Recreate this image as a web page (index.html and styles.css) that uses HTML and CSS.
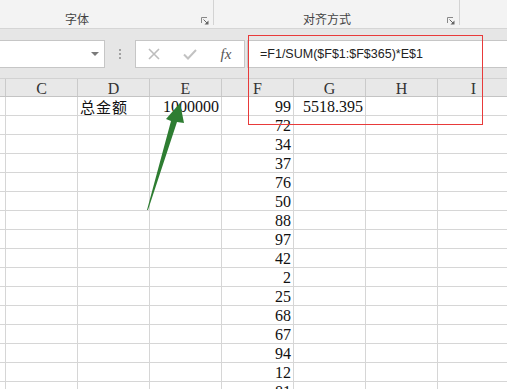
FILE: index.html
```html
<!DOCTYPE html>
<html lang="zh-CN">
<head>
    <meta charset="UTF-8">
    <title>工作表</title>
    <link rel="stylesheet" href="styles.css">
</head>
<body>
    <!-- ribbon group labels -->
    <div class="ribbon">
        <div class="group g-font">
            <span class="group-label">字体</span>
            <span class="launcher"><svg width="8" height="8" viewBox="0 0 8 8"><path d="M0.5 6V0.5H6" fill="none" stroke="#888"/><path d="M2.5 2.5L6.5 6.5" stroke="#666"/><path d="M7.5 3.5V7.5H3.5Z" fill="#666"/></svg></span>
        </div>
        <div class="group g-align">
            <span class="group-label">对齐方式</span>
            <span class="launcher"><svg width="8" height="8" viewBox="0 0 8 8"><path d="M0.5 6V0.5H6" fill="none" stroke="#888"/><path d="M2.5 2.5L6.5 6.5" stroke="#666"/><path d="M7.5 3.5V7.5H3.5Z" fill="#666"/></svg></span>
        </div>
    </div>

    <!-- formula bar -->
    <div class="formula-area">
        <div class="formula-bar">
            <div class="name-box"><span class="dropdown"></span></div>
            <div class="grip"><span class="dots"></span></div>
            <div class="fx-buttons">
                <span class="btn"><svg width="12" height="12" viewBox="0 0 12 12"><path d="M1 1L11 11M11 1L1 11" stroke="#bdbdbd" stroke-width="1.6"/></svg></span>
                <span class="btn"><svg width="14" height="11" viewBox="0 0 14 11"><path d="M1 5.5L5 9.5L13 1" fill="none" stroke="#c2c2c2" stroke-width="2"/></svg></span>
                <span class="btn fx">fx</span>
            </div>
            <div class="formula-input">=F1/SUM($F$1:$F$365)*E$1</div>
        </div>
    </div>

    <!-- grid -->
    <div class="sheet">
        <div class="row head">
            <div class="cell stub"></div>
            <div class="cell">C</div><div class="cell">D</div><div class="cell">E</div><div class="cell">F</div>
            <div class="cell">G</div><div class="cell">H</div><div class="cell">I</div>
        </div>
        <div class="row">
            <div class="cell stub"></div><div class="cell"></div>
            <div class="cell text">总金额</div>
            <div class="cell num">1000000</div>
            <div class="cell num">99</div>
            <div class="cell num">5518.395</div>
            <div class="cell"></div><div class="cell"></div>
        </div>
        <div class="row"><div class="cell stub"></div><div class="cell"></div><div class="cell"></div><div class="cell"></div><div class="cell num">72</div><div class="cell"></div><div class="cell"></div><div class="cell"></div></div>
        <div class="row"><div class="cell stub"></div><div class="cell"></div><div class="cell"></div><div class="cell"></div><div class="cell num">34</div><div class="cell"></div><div class="cell"></div><div class="cell"></div></div>
        <div class="row"><div class="cell stub"></div><div class="cell"></div><div class="cell"></div><div class="cell"></div><div class="cell num">37</div><div class="cell"></div><div class="cell"></div><div class="cell"></div></div>
        <div class="row"><div class="cell stub"></div><div class="cell"></div><div class="cell"></div><div class="cell"></div><div class="cell num">76</div><div class="cell"></div><div class="cell"></div><div class="cell"></div></div>
        <div class="row"><div class="cell stub"></div><div class="cell"></div><div class="cell"></div><div class="cell"></div><div class="cell num">50</div><div class="cell"></div><div class="cell"></div><div class="cell"></div></div>
        <div class="row"><div class="cell stub"></div><div class="cell"></div><div class="cell"></div><div class="cell"></div><div class="cell num">88</div><div class="cell"></div><div class="cell"></div><div class="cell"></div></div>
        <div class="row"><div class="cell stub"></div><div class="cell"></div><div class="cell"></div><div class="cell"></div><div class="cell num">97</div><div class="cell"></div><div class="cell"></div><div class="cell"></div></div>
        <div class="row"><div class="cell stub"></div><div class="cell"></div><div class="cell"></div><div class="cell"></div><div class="cell num">42</div><div class="cell"></div><div class="cell"></div><div class="cell"></div></div>
        <div class="row"><div class="cell stub"></div><div class="cell"></div><div class="cell"></div><div class="cell"></div><div class="cell num">2</div><div class="cell"></div><div class="cell"></div><div class="cell"></div></div>
        <div class="row"><div class="cell stub"></div><div class="cell"></div><div class="cell"></div><div class="cell"></div><div class="cell num">25</div><div class="cell"></div><div class="cell"></div><div class="cell"></div></div>
        <div class="row"><div class="cell stub"></div><div class="cell"></div><div class="cell"></div><div class="cell"></div><div class="cell num">68</div><div class="cell"></div><div class="cell"></div><div class="cell"></div></div>
        <div class="row"><div class="cell stub"></div><div class="cell"></div><div class="cell"></div><div class="cell"></div><div class="cell num">67</div><div class="cell"></div><div class="cell"></div><div class="cell"></div></div>
        <div class="row"><div class="cell stub"></div><div class="cell"></div><div class="cell"></div><div class="cell"></div><div class="cell num">94</div><div class="cell"></div><div class="cell"></div><div class="cell"></div></div>
        <div class="row"><div class="cell stub"></div><div class="cell"></div><div class="cell"></div><div class="cell"></div><div class="cell num">12</div><div class="cell"></div><div class="cell"></div><div class="cell"></div></div>
        <div class="row"><div class="cell stub"></div><div class="cell"></div><div class="cell"></div><div class="cell"></div><div class="cell num">81</div><div class="cell"></div><div class="cell"></div><div class="cell"></div></div>
    </div>

    <!-- annotations drawn over the screenshot -->
    <div class="highlight"></div>
    <svg class="arrow" width="507" height="389" viewBox="0 0 507 389">
        <polygon points="147,210 171,121 166,119 180,103 184,123 177,122 148,210" fill="#2e7d32"/>
    </svg>
</body>
</html>
```

FILE: styles.css
```css
body {
    margin: 0;
    width: 507px;
    height: 389px;
    overflow: hidden;
    position: relative;
    background-color: #fff;
    font-family: "Noto Sans CJK SC", sans-serif;
}

/* Лента */
.ribbon {
    height: 28px;
    background-color: #f3f3f3;
    border-bottom: 1px solid #d5d5d5;
    display: flex;
}
.group {
    height: 25px;
    box-sizing: border-box;
    border-right: 1px solid #d3d3d3;
    padding-top: 10px;
    display: flex;
}
.g-font {
    width: 214px;
}
.g-font .group-label {
    width: 154px;
}
.g-align {
    width: 246px;
}
.g-align .group-label {
    width: 226px;
}
.group-label {
    font-size: 12px;
    line-height: 17px;
    color: #444;
    text-align: center;
}
.launcher {
    margin-left: auto;
    margin-right: 4px;
    align-self: flex-end;
    height: 8px;
}
.launcher svg {
    display: block;
}

/* Строка формул */
.formula-area {
    height: 49px;
    box-sizing: border-box;
    padding-top: 11px;
    background-color: #e6e6e6;
}
.formula-bar {
    display: flex;
    height: 28px;
}
.name-box {
    width: 105px;
    box-sizing: border-box;
    background-color: #fff;
    border: 1px solid #c6c6c6;
    border-left: none;
    display: flex;
    justify-content: flex-end;
    align-items: center;
    padding-right: 5px;
}
.dropdown {
    width: 0;
    height: 0;
    border-left: 4px solid transparent;
    border-right: 4px solid transparent;
    border-top: 4px solid #7a7a7a;
}
.grip {
    width: 30px;
    display: flex;
    justify-content: center;
    align-items: center;
}
.dots {
    width: 2px;
    height: 10px;
    background: repeating-linear-gradient(to bottom, #a2a2a2 0 2px, transparent 2px 4px);
}
.fx-buttons {
    width: 110px;
    box-sizing: border-box;
    background-color: #fff;
    border: 1px solid #c6c6c6;
    display: flex;
}
.btn {
    width: 36px;
    display: flex;
    justify-content: center;
    align-items: center;
}
.btn svg {
    display: block;
}
.fx {
    font-family: "Liberation Serif", serif;
    font-style: italic;
    font-size: 15px;
    color: #555;
}
.formula-input {
    flex-grow: 1;
    margin-left: 2px;
    box-sizing: border-box;
    background-color: #fff;
    border: 1px solid #c6c6c6;
    border-right: none;
    padding-left: 12px;
    font-family: "Liberation Sans", Arial, sans-serif;
    font-size: 12.5px;
    line-height: 26px;
    color: #222;
}

/* Таблица */
.row {
    display: flex;
    height: 19px;
    box-sizing: border-box;
    border-bottom: 1px solid #d6d6d6;
}
.cell {
    width: 72px;
    flex-shrink: 0;
    box-sizing: border-box;
    border-right: 1px solid #d6d6d6;
    font-family: "Liberation Serif", serif;
    font-size: 16px;
    line-height: 18px;
    padding-top: 1px;
    color: #111;
    white-space: nowrap;
}
.cell.stub {
    width: 6px;
}
.head {
    background-color: #e8e8e8;
    border-top: 1px solid #d2d2d2;
    border-bottom-color: #c4c4c4;
}
.head .cell {
    border-right-color: #cacaca;
    text-align: center;
    font-size: 16px;
    line-height: 17px;
    padding-top: 1px;
    color: #333;
}
.num {
    text-align: right;
    padding-right: 2px;
}
.text {
    padding-left: 2px;
    font-family: "Noto Sans CJK SC", sans-serif;
    font-size: 15px;
    line-height: 17px;
    letter-spacing: 1px;
}

/* Пометки поверх */
.highlight {
    position: absolute;
    left: 248px;
    top: 35px;
    width: 235px;
    height: 90px;
    box-sizing: border-box;
    border: 1px solid #e83a3a;
}
.arrow {
    position: absolute;
    left: 0;
    top: 0;
    pointer-events: none;
}
```
